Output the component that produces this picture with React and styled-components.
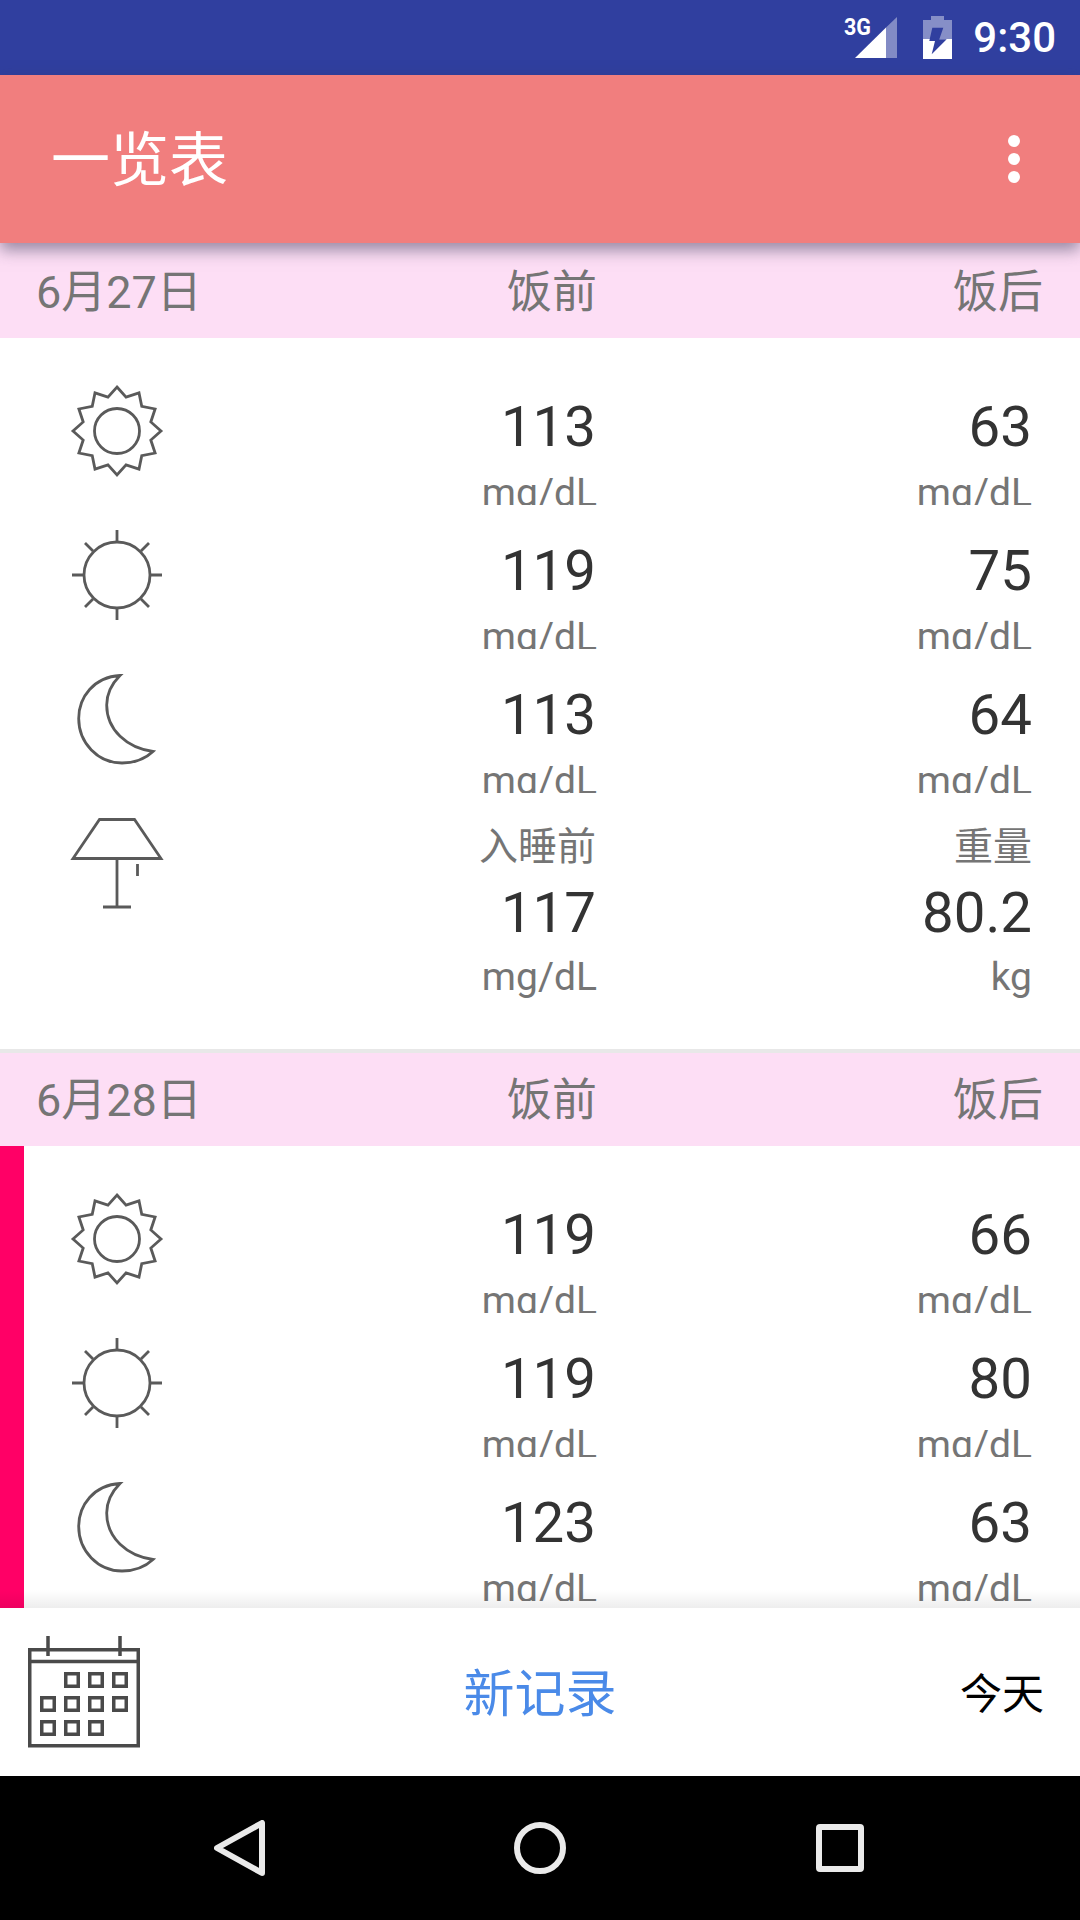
import React from "react";
import styled, { createGlobalStyle } from "styled-components";

const Global = createGlobalStyle`
  html, body { margin: 0; padding: 0; background: #fff; }
  * { box-sizing: border-box; }
  body { font-family: Roboto, "Noto Sans CJK SC", sans-serif; }
`;
const Screen = styled.div`
  width: 1080px; height: 1920px; display: flex; flex-direction: column; overflow: hidden; background: #fff;
`;
const StatusBar = styled.div`
  height: 75px; flex: none; background: #303f9f; display: flex; align-items: center; justify-content: flex-end;
  padding-right: 24px; color: #fff;
`;
const Clock = styled.span`
  font: 500 42px Roboto, sans-serif; margin-left: 21px; line-height: 75px;
`;
const SignalSvg = styled.svg`
  display: block; overflow: visible;
`;
const BatterySvg = styled.svg`
  margin-left: 25px; display: block;
`;
const AppBar = styled.header`
  height: 168px; flex: none; background: #f17e7e; display: flex; align-items: center; justify-content: space-between;
  padding: 0 60px 0 51px; color: #fff; box-shadow: 0 7px 15px rgba(50, 50, 80, 0.5); position: relative; z-index: 2;
`;
const Title = styled.h1`
  margin: 0 0 7px; font: 400 59px Roboto, "Noto Sans CJK SC", sans-serif;
`;
const Dots = styled.div`
  display: flex; flex-direction: column; gap: 6px;
`;
const Dot = styled.span`
  width: 12px; height: 12px; border-radius: 50%; background: #fff;
`;
const List = styled.main`
  flex: 1; min-height: 0; overflow: hidden; position: relative;
  &::after {
    content: ""; position: absolute; left: 0; right: 0; bottom: 0; height: 18px;
    background: linear-gradient(rgba(0,0,0,0), rgba(0,0,0,0.07));
  }
`;
const DayHeader = styled.div`
  height: ${p => (p.$first ? "95px" : "93px")}; background: #fddef5; display: grid; grid-template-columns: 1fr 243px 446px; align-items: center;
  padding: 0 37px ${p => (p.$first ? "4px" : "6px")} 36px; font: 400 45px Roboto, "Noto Sans CJK SC", sans-serif; color: #757575;
`;
const HeaderCell = styled.span`
  text-align: ${p => (p.$end ? "right" : "left")};
`;
const DayBody = styled.section`
  padding: 48px 0 0;
  border-left: ${p => (p.$marked ? "24px solid #ff0066" : "0")};
  height: ${p => (p.$last ? "640px" : "715px")};
  border-bottom: ${p => (p.$last ? "0" : "4px solid #e8e8e8")};
`;
const Row = styled.div`
  display: grid; grid-template-columns: ${p => (p.$marked ? "573px" : "597px")} 435px; position: relative;
  height: ${p => (p.$tall ? "auto" : "144px")};
`;
const IconSlot = styled.div`
  position: absolute; left: ${p => (p.$marked ? "48px" : "72px")}; top: 0; width: 90px; height: 90px;
  svg { display: block; overflow: visible; }
`;
const Cell = styled.div`
  text-align: right; display: flex; flex-direction: column; align-items: flex-end;
`;
const Caption = styled.div`
  font: 400 39px/42px Roboto, "Noto Sans CJK SC", sans-serif; color: #757575; height: 51px; margin-top: 8px;
  padding-right: ${p => (p.$inset ? "1px" : "0")};
`;
const Value = styled.div`
  font: 400 56.4px/72px Roboto, sans-serif; color: #333; margin-top: ${p => (p.$tall ? "0" : "5px")};
  padding-right: ${p => (p.$inset ? "1px" : "0")};
`;
const Unit = styled.div`
  font: 400 39px/48px Roboto, sans-serif; color: #757575; overflow: hidden;
  height: ${p => (p.$clip ? "36px" : "48px")}; margin-top: ${p => (p.$clip ? "6px" : "4px")};
`;
const BottomBar = styled.footer`
  height: 168px; flex: none; background: #fff; display: grid; grid-template-columns: 1fr auto 1fr; align-items: center;
  padding: 0 28px;
`;
const NewRecord = styled.span`
  font: 400 51px Roboto, "Noto Sans CJK SC", sans-serif; color: #4a8ae8; padding-bottom: 4px;
`;
const Today = styled.span`
  font: 400 42px Roboto, "Noto Sans CJK SC", sans-serif; color: #000; justify-self: end; margin-right: 8px; padding-bottom: 4px;
`;
const NavBar = styled.nav`
  height: 144px; flex: none; background: #000; display: flex; align-items: center; justify-content: center;
  svg { display: block; }
`;
const NavSlot = styled.div`
  width: 300px; display: flex; justify-content: center;
`;

const Sw = { fill: "none", stroke: "#5a5a5a", strokeWidth: 2.8 };

const spikes = (() => {
  const pts = [];
  for (let i = 0; i < 24; i++) {
    const r = i % 2 === 0 ? 44 : 35;
    const a = (i * 15 * Math.PI) / 180;
    pts.push(`${(45 + r * Math.sin(a)).toFixed(2)},${(45 - r * Math.cos(a)).toFixed(2)}`);
  }
  return pts.join(" ");
})();

const SunRise = () => (
  <svg width="90" height="90" viewBox="0 0 90 90" {...Sw}>
    <polygon points={spikes} strokeLinejoin="miter" />
    <circle cx="45" cy="45" r="22.5" />
  </svg>
);
const SunNoon = () => (
  <svg width="90" height="90" viewBox="0 0 90 90" {...Sw}>
    <circle cx="45" cy="45" r="33" />
    <path d="M45 0V12M45 78V90M0 45H12M78 45H90M13 13L21 21M77 13L69 21M13 77L21 69M77 77L69 69" />
  </svg>
);
const Moon = () => (
  <svg width="90" height="90" viewBox="0 0 90 90" {...Sw}>
    <path d="M48 1.5C22 3 6.7 23 6.7 44.5C6.7 69 26 89 50 89C62 89 73 85 81 77.5C55 74 34.7 56 34.7 31C34.7 21 39.5 10 48 1.5Z" />
  </svg>
);
const Lamp = () => (
  <svg width="90" height="90" viewBox="0 0 90 90" {...Sw}>
    <path d="M27.5 1.5H62.5L89 40.5H1Z" />
    <path d="M45 40.5V89M31 89H59M65.5 46V58" />
  </svg>
);
const Calendar = () => (
  <svg width="112" height="112" viewBox="0 0 112 112" fill="none" stroke="#4a4a4a" strokeWidth="3.5">
    <rect x="1.75" y="13.75" width="108.5" height="96" />
    <path d="M1.75 25.5H110M20 0V20M92 0V20" />
    {[[1, 0], [2, 0], [3, 0], [0, 1], [1, 1], [2, 1], [3, 1], [0, 2], [1, 2], [2, 2]].map(([c, r]) => (
      <rect key={`${c}-${r}`} x={13.75 + c * 24} y={37.75 + r * 24} width="12.5" height="12.5" />
    ))}
  </svg>
);
const Signal = () => (
  <SignalSvg width="54" height="45" viewBox="0 0 54 45">
    <text x="0" y="20" fill="#fff" fontFamily="Roboto" fontWeight="700" fontSize="24" textLength="27" lengthAdjust="spacingAndGlyphs">3G</text>
    <path d="M42 12.5L53 2V43H42Z" fill="#fff" opacity="0.4" />
    <path d="M11 43L42 12.5V43Z" fill="#fff" />
  </SignalSvg>
);
const Battery = () => (
  <BatterySvg width="29" height="43" viewBox="0 0 29 43">
    <path d="M0 4H8V0H21V4H29V43H0Z" fill="#fff" opacity="0.42" />
    <path d="M0 23H29V43H0Z" fill="#fff" />
    <path d="M9.3 11.7H20.3L16.3 23.3H23.7L8.7 38.3L12 25H6.3Z" fill="#303f9f" />
  </BatterySvg>
);

const NavIcons = [
  <svg key="b" width="52" height="56" viewBox="0 0 52 56" fill="none" stroke="#eaeaea" strokeWidth="6" strokeLinejoin="round"><path d="M48 3V53L3 28Z" /></svg>,
  <svg key="h" width="52" height="52" viewBox="0 0 52 52" fill="none" stroke="#eaeaea" strokeWidth="6"><circle cx="26" cy="26" r="23" /></svg>,
  <svg key="r" width="48" height="48" viewBox="0 0 48 48" fill="none" stroke="#eaeaea" strokeWidth="6" strokeLinejoin="round"><rect x="3" y="3" width="42" height="42" rx="1" /></svg>,
];

const iconFor = [SunRise, SunNoon, Moon];

const Day = ({ date, rows, last, marked, extra, first }) => (
  <>
    <DayHeader $first={first}>
      <HeaderCell>{date}</HeaderCell>
      <HeaderCell $end>饭前</HeaderCell>
      <HeaderCell $end>饭后</HeaderCell>
    </DayHeader>
    <DayBody $marked={marked} $last={last}>
      {rows.map(([a, b], i) => {
        const Icon = iconFor[i];
        return (
          <Row key={i} $marked={marked}>
            <IconSlot $marked={marked}><Icon /></IconSlot>
            <Cell><Value $inset>{a}</Value><Unit $clip>mg/dL</Unit></Cell>
            <Cell><Value>{b}</Value><Unit $clip>mg/dL</Unit></Cell>
          </Row>
        );
      })}
      {extra && (
        <Row $tall>
          <IconSlot><Lamp /></IconSlot>
          <Cell><Caption $inset>入睡前</Caption><Value $inset $tall>{extra[0]}</Value><Unit>mg/dL</Unit></Cell>
          <Cell><Caption>重量</Caption><Value $tall>{extra[1]}</Value><Unit>kg</Unit></Cell>
        </Row>
      )}
    </DayBody>
  </>
);

export default function App() {
  return (
    <Screen>
      <Global />
      <StatusBar>
        <Signal />
        <Battery />
        <Clock>9:30</Clock>
      </StatusBar>
      <AppBar>
        <Title>一览表</Title>
        <Dots><Dot /><Dot /><Dot /></Dots>
      </AppBar>
      <List>
        <Day first date="6月27日" rows={[["113", "63"], ["119", "75"], ["113", "64"]]} extra={["117", "80.2"]} />
        <Day date="6月28日" rows={[["119", "66"], ["119", "80"], ["123", "63"]]} marked last />
      </List>
      <BottomBar>
        <Calendar />
        <NewRecord>新记录</NewRecord>
        <Today>今天</Today>
      </BottomBar>
      <NavBar>
        {NavIcons.map((ic, i) => <NavSlot key={i}>{ic}</NavSlot>)}
      </NavBar>
    </Screen>
  );
}
